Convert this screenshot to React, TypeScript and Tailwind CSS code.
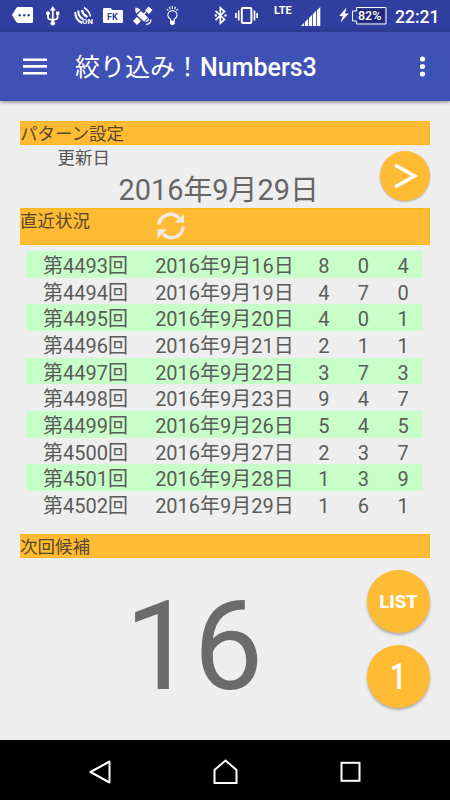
import type { ReactNode } from 'react'

type Draw = { round: number; date: string; digits: [number, number, number] }

const draws: Draw[] = [
  { round: 4493, date: '2016年9月16日', digits: [8, 0, 4] },
  { round: 4494, date: '2016年9月19日', digits: [4, 7, 0] },
  { round: 4495, date: '2016年9月20日', digits: [4, 0, 1] },
  { round: 4496, date: '2016年9月21日', digits: [2, 1, 1] },
  { round: 4497, date: '2016年9月22日', digits: [3, 7, 3] },
  { round: 4498, date: '2016年9月23日', digits: [9, 4, 7] },
  { round: 4499, date: '2016年9月26日', digits: [5, 4, 5] },
  { round: 4500, date: '2016年9月27日', digits: [2, 3, 7] },
  { round: 4501, date: '2016年9月28日', digits: [1, 3, 9] },
  { round: 4502, date: '2016年9月29日', digits: [1, 6, 1] },
]

function StatusBar() {
  return (
    <div className="flex h-[31px] shrink-0 items-start bg-[#303f9f] pl-3 text-white">
      {/* message */}
      <svg className="mt-[7px] h-4 w-[21px] shrink-0" viewBox="0 0 21 16">
        <path fill="#fff" d="M6 0h13.5Q21 0 21 1.500v13q0 1.500-1.500 1.500H6Q5 16 4.300 15L0 8l4.300-7Q5 0 6 0z" />
        <g fill="#303f9f">
          <circle cx="7.700" cy="8.300" r="1.200" />
          <circle cx="12.200" cy="8.300" r="1.200" />
          <circle cx="16.700" cy="8.300" r="1.200" />
        </g>
      </svg>
      {/* usb */}
      <svg className="mt-[6px] ml-[13px] h-5 w-[14px] shrink-0" viewBox="0 0 14 20">
        <g fill="none" stroke="#fff" strokeWidth="1.800">
          <path d="M6.800 3v14M2 8v3q0 2 2 2.300l2.800 .9 2.800-.9q2-.3 2-2.300V7" />
        </g>
        <path fill="#fff" d="M6.800 0l3 4.500h-6zM10 5.500h3.300v3.500H10z" />
        <circle cx="2" cy="7.200" r="2" fill="#fff" />
        <circle cx="6.800" cy="17.300" r="2.300" fill="#fff" />
      </svg>
      {/* antenna on */}
      <svg className="mt-[6px] ml-[14px] h-5 w-[19px] shrink-0" viewBox="0 0 19 20">
        <g fill="none" stroke="#fff">
          <path strokeWidth="2" d="M1.200 6q0 8 7 11" />
          <path strokeWidth="2" d="M4.300 4.500q-.3 6.500 5 8.500" />
          <path strokeWidth="2.400" d="M8 4q1 5 5.500 7" />
          <path strokeWidth="1.500" d="M10 1.500q5.500 3.500 6.500 9" />
        </g>
        <text x="8" y="18.300" fill="#fff" fontSize="7.800" fontWeight="700" fontFamily="Roboto, sans-serif">ON</text>
      </svg>
      {/* folder */}
      <svg className="mt-2 ml-[10px] h-[15px] w-5 shrink-0" viewBox="0 0 20 15">
        <path fill="#fff" d="M1 0h6.500l2 2H19q1 0 1 1v11q0 1-1 1H1q-1 0-1-1V1q0-1 1-1z" />
        <text x="4" y="12" fill="#303f9f" fontSize="9" fontWeight="700" fontFamily="Roboto, sans-serif">FK</text>
      </svg>
      {/* satellite */}
      <svg className="mt-[6px] ml-[10px] h-5 w-5 shrink-0" viewBox="0 0 20 20">
        <g fill="#fff">
          <path d="M8 5l7 6.500-4 4-7-6.500z" />
          <path d="M12 4.500L15.500 .5 19.500 4 16 8zM4 11l4 4-4 4-4-4z" />
          <path d="M2.500 1.500q3 0 5 2.500L3.500 7.500Q1.500 5 2.500 1.500z" />
        </g>
        <g fill="none" stroke="#fff" strokeWidth="1.400">
          <path d="M7 12l6-6M13 18.500q4.500-.5 5-5M12.500 15.500q2.500 0 3-3" />
        </g>
      </svg>
      {/* bulb */}
      <svg className="mt-[5px] ml-[13px] h-[21px] w-[13px] shrink-0" viewBox="0 0 13 21">
        <g fill="none" stroke="#fff" strokeWidth="1.100">
          <path d="M4.500 16v-2Q1.800 12.500 1.800 10.200a4.600 4.600 0 0 1 9.200 0q0 2.300-2.700 3.800v2z" />
          <path d="M6.400 1v3M3.300 1.700l.9 2.600M9.500 1.700l-.9 2.600M.9 4l1.400 1.700M11.900 4l-1.400 1.700" />
        </g>
        <path fill="#fff" d="M4 16h4.800v2.500L7.500 20H5.300L4 18.500z" />
      </svg>
      {/* bluetooth */}
      <svg className="mt-[6px] ml-[35px] h-[19px] w-[13px] shrink-0" viewBox="0 0 13 19">
        <g fill="none" stroke="#fff" strokeWidth="1.700">
          <path d="M1.500 4.800l9 8.700-4.200 3.700V1.800l4.200 3.700-9 8.700" />
        </g>
        <circle cx="1.800" cy="9.500" r="1.200" fill="#fff" />
        <circle cx="11.500" cy="9.500" r="1.200" fill="#fff" />
      </svg>
      {/* vibrate */}
      <svg className="mt-[6px] ml-2 h-[19px] w-[23px] shrink-0" viewBox="0 0 23 19">
        <g fill="none" stroke="#fff">
          <rect x="6.800" y="2" width="9.600" height="15" rx="1" strokeWidth="2" />
          <path strokeWidth="1.700" d="M3.700 4.500v10M19.500 4.500v10M.9 7v5M22.100 7v5" />
        </g>
      </svg>
      <span className="mt-[4px] ml-4 w-[19px] shrink-0 text-[11px] leading-[13px] font-bold">LTE</span>
      {/* signal */}
      <svg className="mt-[6px] ml-2 h-5 w-5 shrink-0" viewBox="0 0 20 20">
        <path fill="#fff" d="M0 20l3.200-3.200V20zM4 16l3.200-3.200V20H4zM8 12l3.200-3.200V20H8zM12 8l3.200-3.200V20H12zM16 4.200L19.300 1v19H16z" />
      </svg>
      {/* battery */}
      <svg className="mt-[7px] ml-[18px] h-4 w-[10px] shrink-0" viewBox="0 0 10 16">
        <path fill="#fff" d="M7.500 .5L.2 9h3.600L1.500 15.500 9.800 6.500H6z" />
      </svg>
      <div className="relative mt-[7px] ml-[3px] h-[18px] w-[35px] shrink-0">
        <svg className="absolute inset-0 h-[18px] w-[35px]" viewBox="0 0 35 18">
          <path fill="none" stroke="#fff" strokeWidth="1" d="M4.500 .5h29.500v16.500H4.500v-3H.5V4h4z" />
          <path fill="#202b78" d="M6 2h26.500v13.500H6z" />
        </svg>
        <span className="relative block pl-[6px] text-[12.500px] leading-[18px] font-medium">82%</span>
      </div>
      <span className="mt-[7px] ml-[8px] shrink-0 text-[17.500px] leading-[21px] font-medium">22:21</span>
    </div>
  )
}

function AppBar() {
  return (
    <header className="relative flex h-[70px] shrink-0 items-center border-t border-[#303d96] bg-[#3f51b5] pr-[25px] pl-[23px] text-white shadow-[0_1px_4px_rgba(0,0,0,0.45)]">
      <svg className="h-[18px] w-6" viewBox="0 0 24 18" stroke="#fff" strokeWidth="2.600">
        <path d="M0 1.800h24M0 8.400h24M0 15.200h24" />
      </svg>
      <h1 className="mt-[3px] ml-7 flex-1 text-[25px] leading-8 font-medium whitespace-nowrap">
        <span className="font-normal">絞り込み！</span>Numbers3
      </h1>
      <svg className="h-[22px] w-[6px]" viewBox="0 0 6 22" fill="#fff">
        <circle cx="3.500" cy="3" r="2.600" />
        <circle cx="3.500" cy="10.500" r="2.600" />
        <circle cx="3.500" cy="18" r="2.600" />
      </svg>
    </header>
  )
}

function SectionTitle({ className, children }: { className: string; children: ReactNode }) {
  return (
    <div className={`flex shrink-0 items-start border-y border-r border-[#ffb61c] bg-[#ffbb33] text-[17.500px] leading-[24px] text-[#57482a] ${className}`}>
      {children}
    </div>
  )
}

function RefreshIcon() {
  return (
    <svg className="mt-[2px] ml-[66px] h-[30px] w-[30px]" viewBox="0 0 30 30">
      <g fill="none" stroke="#eeebe2" strokeWidth="3.400">
        <path d="M3 13.500A11.500 10.800 0 0 1 23 7" />
        <path d="M27 15.500A11.500 10.800 0 0 1 7 23" />
      </g>
      <path fill="#eeebe2" d="M28 3v8.700H18.500zM1.500 18.200h9.300L1.500 27.500z" />
    </svg>
  )
}

function ResultTable() {
  return (
    <div className="mx-[6px] mt-[6px] mr-[7px] shrink-0 text-[20px] text-[#5a5c5a]">
      {draws.map((draw, i) => (
        <div key={draw.round} className={`flex h-[26.680px] items-center pt-[3px] leading-[26px] ${i % 2 === 0 ? 'bg-[#c8ffc8]' : ''}`}>
          <span className="w-[119px] text-center whitespace-nowrap">第{draw.round}回</span>
          <span className="w-[159px] text-center whitespace-nowrap">{draw.date}</span>
          {draw.digits.map((digit, j) => (
            <span key={j} className="w-[39.700px] text-center">{digit}</span>
          ))}
        </div>
      ))}
    </div>
  )
}

function NavBar() {
  return (
    <nav className="flex h-[60px] shrink-0 items-center justify-between bg-black pt-1 pr-[88px] pl-[87px]">
      <svg className="h-6 w-6" viewBox="0 0 24 24" fill="none" stroke="#fff" strokeWidth="2" strokeLinejoin="round">
        <path d="M3.500 12L22.500 1.500v21z" />
      </svg>
      <svg className="h-[26px] w-[26px]" viewBox="0 0 26 26" fill="none" stroke="#fff" strokeWidth="2">
        <path d="M1.500 24V11L12.500 1.500 23.500 11v13z" />
      </svg>
      <svg className="h-[22px] w-[22px]" viewBox="0 0 22 22" fill="none" stroke="#fff" strokeWidth="2">
        <rect x="1.500" y="1.800" width="18" height="18" />
      </svg>
    </nav>
  )
}

export default function App() {
  return (
    <div className="flex h-[800px] w-[450px] flex-col overflow-hidden bg-[#eeeeee] font-[Roboto,'Noto_Sans_CJK_JP',sans-serif]">
      <StatusBar />
      <AppBar />
      <main className="flex flex-1 flex-col px-5 pt-5">
        <SectionTitle className="h-6">パターン設定</SectionTitle>
        <div className="flex h-[62.500px] shrink-0 justify-between">
          <div>
            <p className="pt-px pl-[37.500px] text-[17.500px] leading-[24px] text-[#555]">更新日</p>
            <p className="pl-[98.500px] text-[28.900px] leading-[41px] whitespace-nowrap text-[#666]">2016年9月29日</p>
          </div>
          <button className="mt-[6px] flex size-[50px] items-center justify-center rounded-full bg-[#ffbb33] shadow-[0_1px_2px_rgba(0,0,0,0.25)]">
            <svg className="h-[26px] w-[26px]" viewBox="0 0 26 26" fill="none" stroke="#fff" strokeWidth="3.500">
              <path d="M3 2L22.500 13 3 24" />
            </svg>
          </button>
        </div>
        <SectionTitle className="h-[37.500px]">
          直近状況
          <RefreshIcon />
        </SectionTitle>
        <ResultTable />
        <SectionTitle className="mt-4 h-6">次回候補</SectionTitle>
        <div className="flex flex-1 items-start justify-between">
          <p className="mt-[16px] w-[348px] text-center text-[124px] leading-[146px] tracking-[-1px] text-[#6b6b6b]">16</p>
          <div className="mt-[12px] flex flex-col gap-3 text-white">
            <button className="size-[63px] rounded-full bg-[#ffbb33] pt-[3px] text-[18.500px] font-extrabold shadow-[0_2px_3px_rgba(0,0,0,0.28)]">LIST</button>
            <button className="size-[63px] rounded-full bg-[#ffbb33] pt-px text-[36px] shadow-[0_2px_3px_rgba(0,0,0,0.28)]">
              <span className="inline-block scale-x-80 font-medium">1</span>
            </button>
          </div>
        </div>
      </main>
      <NavBar />
    </div>
  )
}
